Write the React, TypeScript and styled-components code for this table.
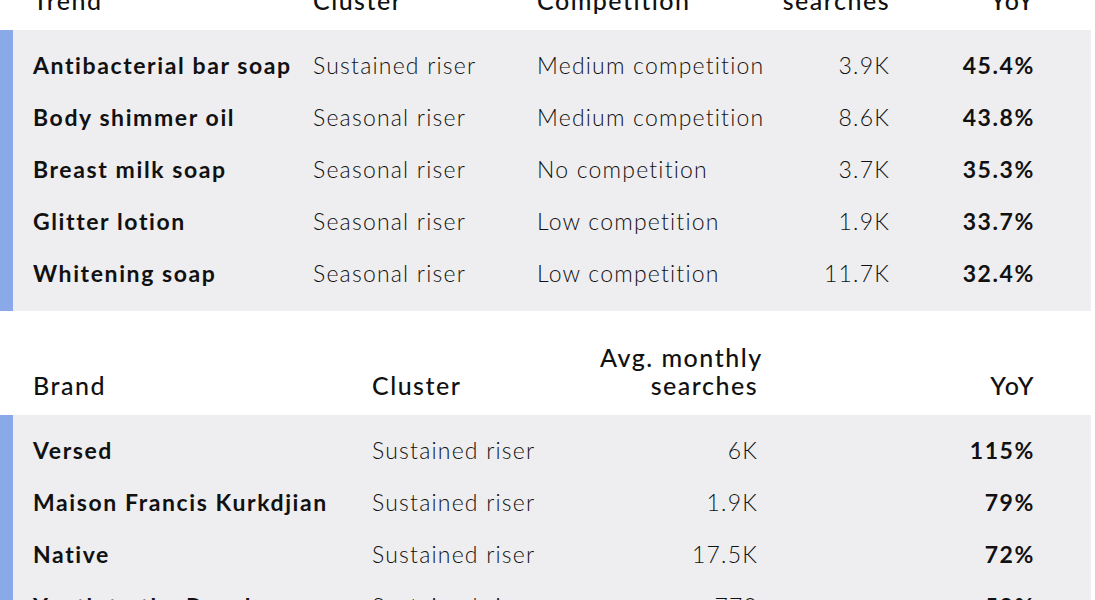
import styled, { createGlobalStyle } from "styled-components";

const GlobalStyle = createGlobalStyle`
  body {
    margin: 0;
    background: #ffffff;
    font-family: Lato, "Liberation Sans", sans-serif;
    color: #111111;
  }
`;

const Page = styled.div`
  display: flex;
  flex-direction: column;
  gap: 32px;
  margin-top: -42px;
  padding-right: 4px;
`;

const Table = styled.section``;

const Grid = styled.div<{ $cols: string }>`
  display: grid;
  grid-template-columns: ${(props) => props.$cols};
  align-items: end;
`;

const Head = styled(Grid)`
  padding: 0 54px 16px 33px;
`;

const HeadCell = styled.div<{ $right?: boolean }>`
  font-size: 25px;
  font-weight: 500;
  line-height: 28px;
  letter-spacing: 1.5px;
  white-space: nowrap;
  text-align: ${(props) => (props.$right ? "right" : "left")};
`;

const Body = styled.div`
  background: #eeeef0;
  border-left: 13px solid #89a9e9;
  padding: 9px 55px 12px 20px;
`;

const Row = styled(Grid)`
  height: 52px;
  align-items: center;
`;

const Cell = styled.div<{ $right?: boolean; $weight?: number }>`
  font-size: 23px;
  font-weight: ${(props) => props.$weight ?? 300};
  letter-spacing: ${(props) => (props.$weight ? "1.6px" : "1.2px")};
  text-align: ${(props) => (props.$right ? "right" : "left")};
  white-space: nowrap;
`;

const trendCols = "280px 224px 233px 120px 145px";
const brandCols = "339px 228px 158px 277px";

const trends = [
  ["Antibacterial bar soap", "Sustained riser", "Medium competition", "3.9K", "45.4%"],
  ["Body shimmer oil", "Seasonal riser", "Medium competition", "8.6K", "43.8%"],
  ["Breast milk soap", "Seasonal riser", "No competition", "3.7K", "35.3%"],
  ["Glitter lotion", "Seasonal riser", "Low competition", "1.9K", "33.7%"],
  ["Whitening soap", "Seasonal riser", "Low competition", "11.7K", "32.4%"],
];

const brands = [
  ["Versed", "Sustained riser", "6K", "115%"],
  ["Maison Francis Kurkdjian", "Sustained riser", "1.9K", "79%"],
  ["Native", "Sustained riser", "17.5K", "72%"],
  ["Youth to the People", "Sustained riser", "770", "58%"],
];

export default function App() {
  return (
    <>
      <GlobalStyle />
      <Page>
        <Table>
          <Head $cols={trendCols}>
            <HeadCell>Trend</HeadCell>
            <HeadCell>Cluster</HeadCell>
            <HeadCell>Competition</HeadCell>
            <HeadCell $right>
              Avg. monthly
              <br />
              searches
            </HeadCell>
            <HeadCell $right>YoY</HeadCell>
          </Head>
          <Body>
            {trends.map((t) => (
              <Row key={t[0]} $cols={trendCols}>
                <Cell $weight={700}>{t[0]}</Cell>
                <Cell>{t[1]}</Cell>
                <Cell>{t[2]}</Cell>
                <Cell $right>{t[3]}</Cell>
                <Cell $right $weight={700}>
                  {t[4]}
                </Cell>
              </Row>
            ))}
          </Body>
        </Table>
        <Table>
          <Head $cols={brandCols}>
            <HeadCell>Brand</HeadCell>
            <HeadCell>Cluster</HeadCell>
            <HeadCell $right>
              Avg. monthly
              <br />
              searches
            </HeadCell>
            <HeadCell $right>YoY</HeadCell>
          </Head>
          <Body>
            {brands.map((b) => (
              <Row key={b[0]} $cols={brandCols}>
                <Cell $weight={700}>{b[0]}</Cell>
                <Cell>{b[1]}</Cell>
                <Cell $right>{b[2]}</Cell>
                <Cell $right $weight={700}>
                  {b[3]}
                </Cell>
              </Row>
            ))}
          </Body>
        </Table>
      </Page>
    </>
  );
}
